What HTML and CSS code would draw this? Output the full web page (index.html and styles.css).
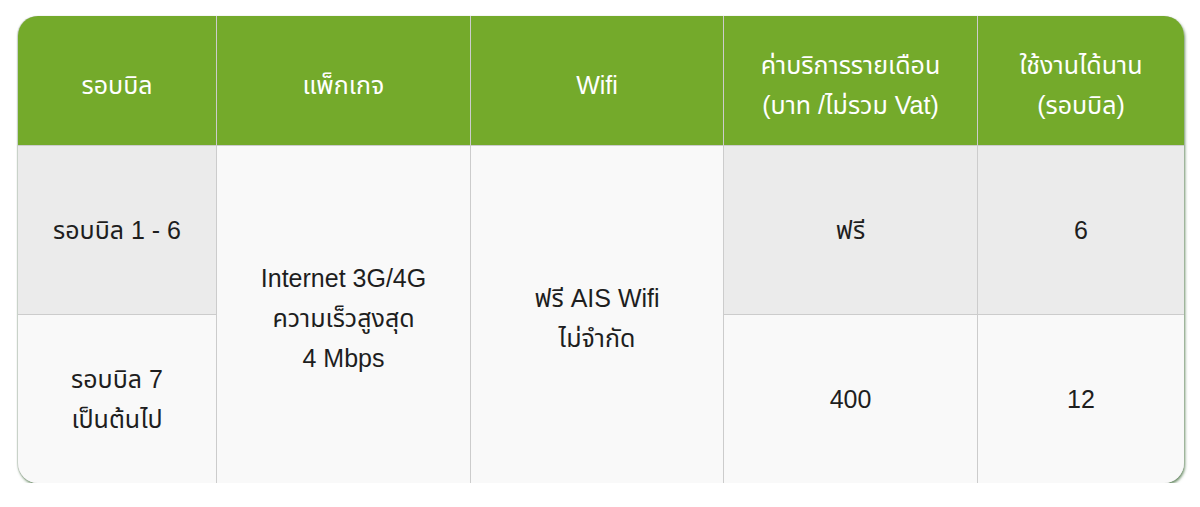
FILE: index.html
```html
<!DOCTYPE html>
<html lang="th">
<head>
<meta charset="utf-8">
<link rel="stylesheet" href="styles.css">
</head>
<body>
<div class="card">
  <div class="grid">
    <div class="cell head">รอบบิล</div>
    <div class="cell head">แพ็กเกจ</div>
    <div class="cell head">Wifi</div>
    <div class="cell head">ค่าบริการรายเดือน<br>(บาท /ไม่รวม Vat)</div>
    <div class="cell head">ใช้งานได้นาน<br>(รอบบิล)</div>

    <div class="cell grey">รอบบิล 1 - 6</div>
    <div class="cell light span2">Internet 3G/4G<br>ความเร็วสูงสุด<br>4 Mbps</div>
    <div class="cell light span2">ฟรี AIS Wifi<br>ไม่จำกัด</div>
    <div class="cell grey top">ฟรี</div>
    <div class="cell grey top">6</div>

    <div class="cell light">รอบบิล 7<br>เป็นต้นไป</div>
    <div class="cell light">400</div>
    <div class="cell light">12</div>
  </div>
</div>
</body>
</html>
```
FILE: styles.css
```css
html, body {
  margin: 0;
  padding: 0;
  background: #ffffff;
}
body {
  font-family: "Liberation Sans", "Noto Sans Thai", "Noto Sans Thai UI", Arial, sans-serif;
}
.card {
  margin: 16px 0 0 18px;
  width: 1166px;
  height: 467px;
  border-radius: 20px;
  overflow: hidden;
  box-shadow: 1px 2px 3px rgba(80, 120, 75, 0.85), -1px 0 1px rgba(120, 140, 120, 0.3);
  background: #cccccc;
}
.grid {
  display: grid;
  grid-template-columns: 198px 253px 252px 253px 206px;
  grid-template-rows: 129px 168px 168px;
  gap: 1px;
  background: #cccccc;
  height: 100%;
}
.cell {
  display: flex;
  align-items: center;
  justify-content: center;
  text-align: center;
  font-size: 25px;
  line-height: 40px;
  color: #1e1e1e;
}
.head {
  background: #74aa2b;
  color: #ffffff;
  padding-top: 8px;
}
.grey {
  background: #ebebeb;
}
.light {
  background: #f9f9f9;
}
.span2 {
  grid-row: span 2;
  padding-top: 7px;
}
.top {
  align-items: flex-start;
  padding-top: 64px;
}
```
